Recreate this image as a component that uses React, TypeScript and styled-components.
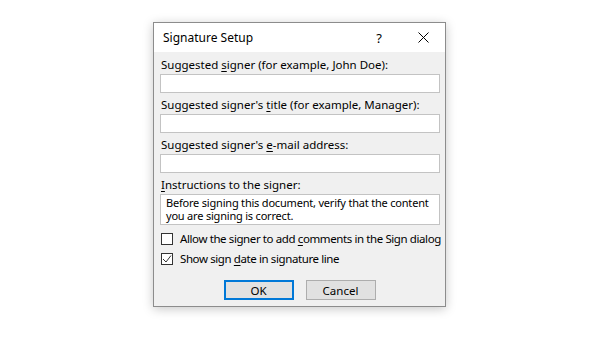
import styled, { createGlobalStyle } from "styled-components";

const GlobalStyle = createGlobalStyle`
  html, body {
    margin: 0;
    padding: 0;
    background: #ffffff;
  }
  body {
    font-family: "Noto Sans", "Open Sans", sans-serif;
    font-size: 11.5px;
    color: #000000;
  }
`;

const Page = styled.div`
  width: 600px;
  height: 338px;
  padding: 22px 0 0 153px;
  box-sizing: border-box;
`;

const Dialog = styled.div`
  width: 293px;
  height: 285px;
  box-sizing: border-box;
  border: 1px solid #8c8c8c;
  background: #f0f0f0;
  box-shadow: 0 2px 10px rgba(0, 0, 0, 0.22);
  display: flex;
  flex-direction: column;
`;

const TitleBar = styled.div`
  height: 29px;
  background: #ffffff;
  display: flex;
  align-items: center;
  padding-left: 9px;
`;

const Title = styled.div`
  flex: 1;
  font-size: 12px;
`;

const TitleButton = styled.div`
  width: 44px;
  height: 29px;
  display: flex;
  align-items: center;
  justify-content: center;
  font-size: 13px;
`;

const Body = styled.div`
  flex: 1;
  display: flex;
  flex-direction: column;
  padding: 3px 5px 0 6px;
`;

const Field = styled.div`
  display: flex;
  flex-direction: column;
  margin-bottom: 2px;
`;

const Label = styled.div`
  height: 19px;
  line-height: 19px;
  padding-left: 1px;
  white-space: nowrap;
`;

const Input = styled.div<{ $rows?: number }>`
  height: ${(p) => (p.$rows ? 31 : 19)}px;
  box-sizing: border-box;
  background: #ffffff;
  border: 1px solid #c3c3c3;
  padding: 1px 3px 1px 5px;
  font-size: 11px;
  letter-spacing: -0.2px;
  line-height: 13px;
`;

const CheckRow = styled.div<{ $top: number }>`
  display: flex;
  align-items: center;
  height: 19px;
  margin-top: ${(p) => p.$top}px;
  padding-left: 1px;
  gap: 7px;
  white-space: nowrap;
  letter-spacing: -0.4px;
`;

const Box = styled.div`
  flex-shrink: 0;
  width: 12px;
  height: 12px;
  box-sizing: border-box;
  border: 1px solid #333333;
  background: #ffffff;
  display: flex;
  align-items: center;
  justify-content: center;
`;

const Buttons = styled.div`
  display: flex;
  justify-content: center;
  gap: 12px;
  margin-top: 12px;
  padding-right: 1px;
`;

const Button = styled.div<{ $default?: boolean }>`
  width: 70px;
  height: 20px;
  box-sizing: border-box;
  background: #e1e1e1;
  border: ${(p) => (p.$default ? "2px solid #0078d7" : "1px solid #adadad")};
  display: flex;
  align-items: center;
  justify-content: center;
`;

const U = styled.span`
  text-decoration: underline;
  text-underline-offset: 2px;
`;

export default function App() {
  return (
    <>
      <GlobalStyle />
      <Page>
        <Dialog>
          <TitleBar>
            <Title>Signature Setup</Title>
            <TitleButton>?</TitleButton>
            <TitleButton>
              <svg width="11" height="11" viewBox="0 0 11 11">
                <path d="M0.5 0.5 L10.5 10.5 M10.5 0.5 L0.5 10.5" stroke="#000" strokeWidth="1" />
              </svg>
            </TitleButton>
          </TitleBar>
          <Body>
            <Field>
              <Label>
                Suggested <U>s</U>igner (for example, John Doe):
              </Label>
              <Input />
            </Field>
            <Field>
              <Label>
                Suggested signer's <U>t</U>itle (for example, Manager):
              </Label>
              <Input />
            </Field>
            <Field>
              <Label>
                Suggested signer's <U>e</U>-mail address:
              </Label>
              <Input />
            </Field>
            <Field>
              <Label>
                <U>I</U>nstructions to the signer:
              </Label>
              <Input $rows={2}>
                Before signing this document, verify that the content you are signing is correct.
              </Input>
            </Field>
            <CheckRow $top={2}>
              <Box />
              <span>
                Allow the signer to add <U>c</U>omments in the Sign dialog
              </span>
            </CheckRow>
            <CheckRow $top={1}>
              <Box>
                <svg width="10" height="10" viewBox="0 0 10 10">
                  <path d="M1 5 L4 8 L9 1.5" fill="none" stroke="#333" strokeWidth="1" />
                </svg>
              </Box>
              <span>
                Show sign <U>d</U>ate in signature line
              </span>
            </CheckRow>
            <Buttons>
              <Button $default>OK</Button>
              <Button>Cancel</Button>
            </Buttons>
          </Body>
        </Dialog>
      </Page>
    </>
  );
}
